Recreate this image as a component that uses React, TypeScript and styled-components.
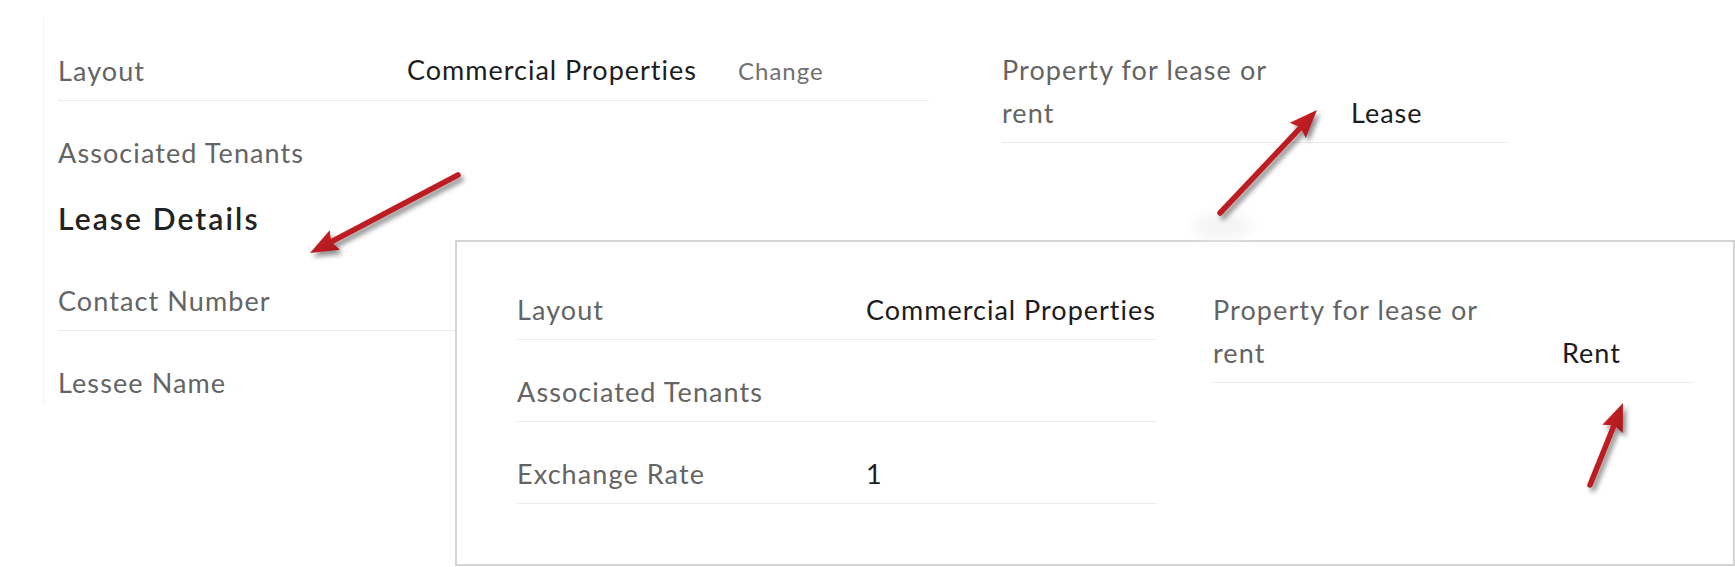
import React from 'react';
import styled, { createGlobalStyle } from 'styled-components';

const Global = createGlobalStyle`
  html, body { margin: 0; padding: 0; background: #ffffff; }
  body {
    font-family: Lato, "Open Sans", "Liberation Sans", sans-serif;
    width: 1735px;
    height: 567px;
    overflow: hidden;
  }
`;

const Page = styled.div`
  position: relative;
  width: 1735px;
  height: 567px;
  box-sizing: border-box;
  padding: 18px 0 0 43px;
  display: flex;
  align-items: flex-start;
  gap: 67px;
`;

const LeftPanel = styled.section`
  width: 871px;
  padding: 0 6px 0 14px;
  border-left: 1px solid #f3f3f3;
  height: 385px;
  box-sizing: content-box;
`;

const RightPanel = styled.section`
  width: 505px;
`;

const Row = styled.div<{ $divider?: boolean; $labelWidth?: number }>`
  display: grid;
  grid-template-columns: ${(p) => p.$labelWidth ?? 349}px 1fr;
  align-items: end;
  padding: 30px 0 8px;
  line-height: 43px;
  border-bottom: 1px solid ${(p) => (p.$divider ? '#ebebeb' : 'transparent')};
`;

const Label = styled.div<{ $wrap?: number }>`
  font-size: 27px;
  letter-spacing: 1.1px;
  color: #646464;
  max-width: ${(p) => (p.$wrap ? `${p.$wrap}px` : 'none')};
`;

const Value = styled.div`
  font-size: 27px;
  letter-spacing: 1px;
  color: #1c1c1c;
  display: flex;
  align-items: baseline;
  gap: 41px;
`;

const ChangeLink = styled.span`
  font-size: 24px;
  letter-spacing: 1px;
  color: #707070;
`;

const SectionHeading = styled.h2`
  margin: 0;
  padding: 14px 0 9px;
  font-size: 30px;
  letter-spacing: 2.1px;
  line-height: 43px;
  font-weight: 600;
  color: #222222;
`;

const Overlay = styled.section`
  position: absolute;
  left: 455px;
  top: 240px;
  width: 1280px;
  height: 326px;
  box-sizing: border-box;
  background: #ffffff;
  border: 2px solid #d4d4d4;
  padding: 16px 0 0 60px;
  display: grid;
  grid-template-columns: 640px 480px;
  column-gap: 56px;
  align-items: start;
`;

const Column = styled.div``;

const ArrowLayer = styled.svg`
  position: absolute;
  left: 0;
  top: 0;
  pointer-events: none;
`;

type Pt = [number, number];

function Arrow({ from, to }: { from: Pt; to: Pt }) {
  const [x1, y1] = from;
  const [x2, y2] = to;
  const dx = x2 - x1;
  const dy = y2 - y1;
  const len = Math.hypot(dx, dy);
  const ux = dx / len;
  const uy = dy / len;
  const px = -uy;
  const py = ux;
  const headLen = 28;
  const headHalf = 11;
  const bx = x2 - ux * headLen;
  const by = y2 - uy * headLen;
  const notch = 4;
  const nx = bx + ux * notch;
  const ny = by + uy * notch;
  const head = [
    `${x2},${y2}`,
    `${bx + px * headHalf},${by + py * headHalf}`,
    `${nx},${ny}`,
    `${bx - px * headHalf},${by - py * headHalf}`,
  ].join(' ');
  return (
    <g filter="url(#arrowShadow)">
      <line
        x1={x1}
        y1={y1}
        x2={nx + ux * 2}
        y2={ny + uy * 2}
        stroke="url(#arrowRed)"
        strokeWidth={5.5}
        strokeLinecap="round"
      />
      <polygon points={head} fill="url(#arrowRed)" />
    </g>
  );
}

export default function App() {
  return (
    <>
      <Global />
      <Page>
        <LeftPanel>
          <Row $divider>
            <Label>Layout</Label>
            <Value>
              Commercial Properties
              <ChangeLink>Change</ChangeLink>
            </Value>
          </Row>
          <Row>
            <Label>Associated Tenants</Label>
            <Value />
          </Row>
          <SectionHeading>Lease Details</SectionHeading>
          <Row $divider>
            <Label>Contact Number</Label>
            <Value />
          </Row>
          <Row>
            <Label>Lessee Name</Label>
            <Value />
          </Row>
        </LeftPanel>
        <RightPanel>
          <Row $divider>
            <Label $wrap={295}>Property for lease or rent</Label>
            <Value>Lease</Value>
          </Row>
        </RightPanel>

        <Overlay>
          <Column>
            <Row $divider>
              <Label>Layout</Label>
              <Value>Commercial Properties</Value>
            </Row>
            <Row $divider>
              <Label>Associated Tenants</Label>
              <Value />
            </Row>
            <Row $divider>
              <Label>Exchange Rate</Label>
              <Value>1</Value>
            </Row>
          </Column>
          <Column>
            <Row $divider>
              <Label $wrap={295}>Property for lease or rent</Label>
              <Value>Rent</Value>
            </Row>
          </Column>
        </Overlay>

        <ArrowLayer width={1735} height={567} viewBox="0 0 1735 567">
          <defs>
            <linearGradient id="arrowRed" x1="0" y1="0" x2="1" y2="1">
              <stop offset="0" stopColor="#d4272a" />
              <stop offset="1" stopColor="#a5161a" />
            </linearGradient>
            <filter id="arrowShadow" x="-20%" y="-20%" width="150%" height="150%">
              <feDropShadow dx="3" dy="4" stdDeviation="2.5" floodColor="#000" floodOpacity="0.45" />
            </filter>
            <filter id="glow" x="-50%" y="-50%" width="200%" height="200%">
              <feGaussianBlur stdDeviation="6" />
            </filter>
          </defs>
          <ellipse cx={1222} cy={226} rx={30} ry={12} fill="#f4f4f4" filter="url(#glow)" />
          <Arrow from={[458, 175]} to={[310, 253]} />
          <Arrow from={[1220, 213]} to={[1317, 110]} />
          <Arrow from={[1590, 485]} to={[1623, 403]} />
        </ArrowLayer>
      </Page>
    </>
  );
}
